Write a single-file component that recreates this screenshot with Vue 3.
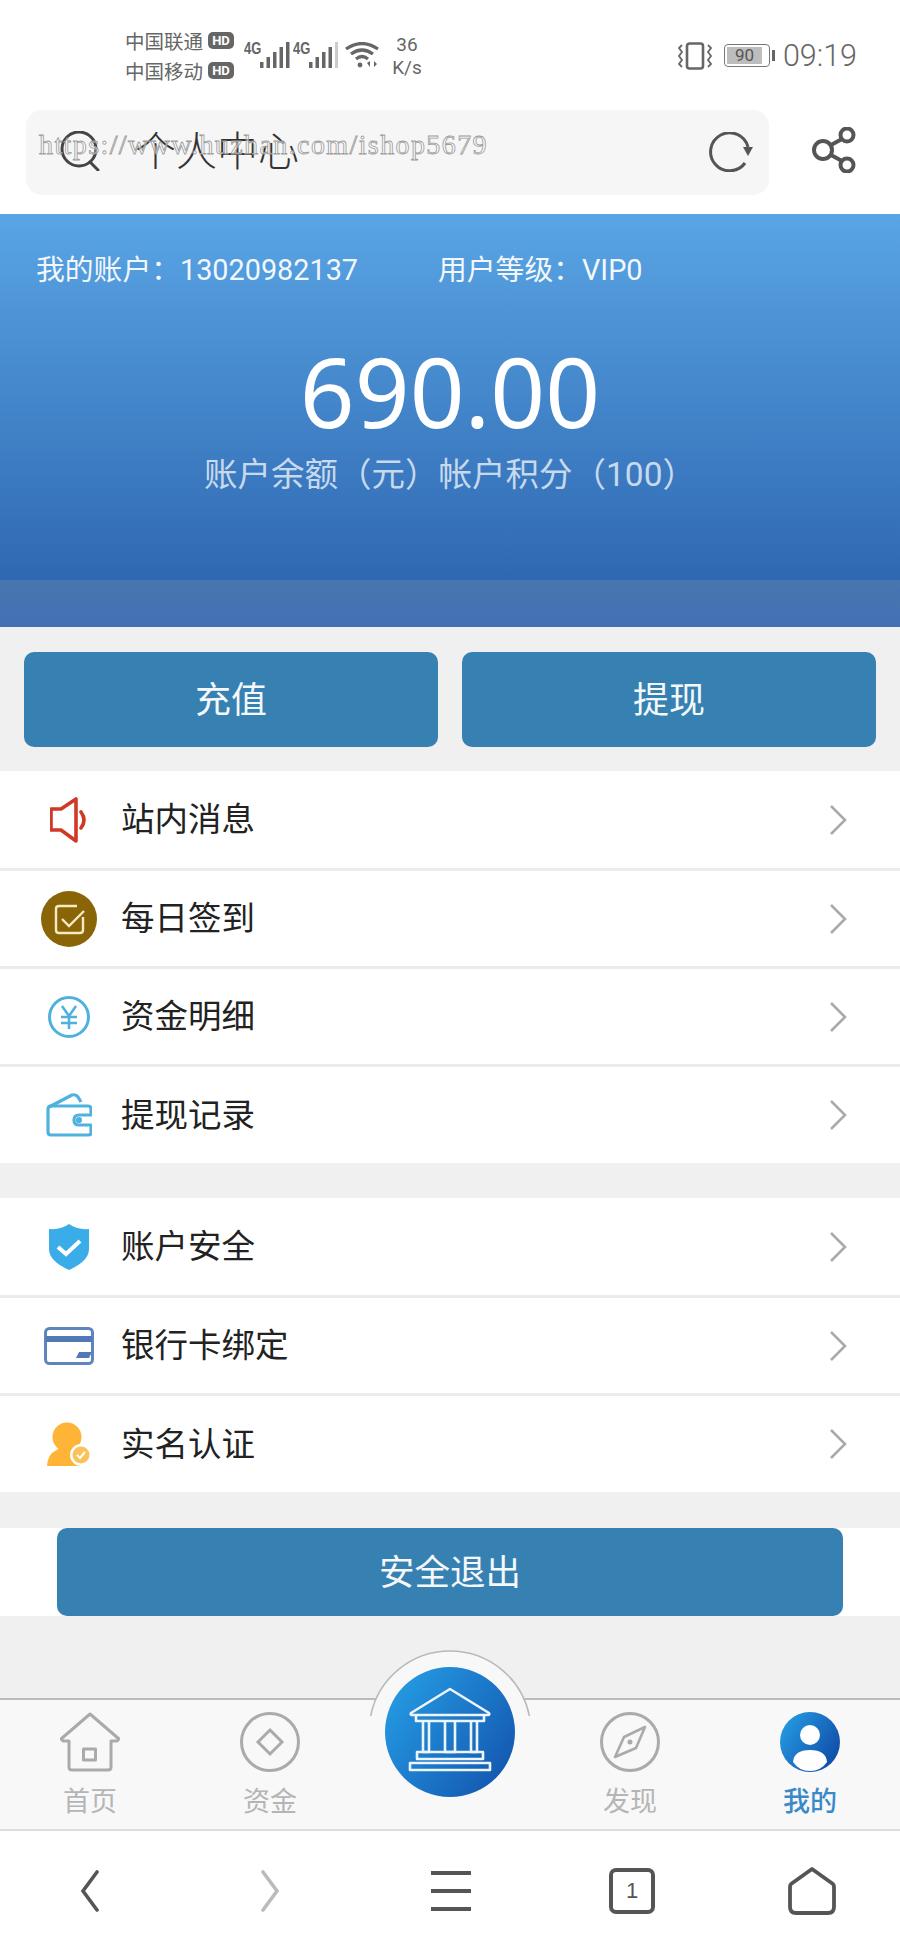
<template>
  <div class="page">
    <header class="head">
      <div class="status">
        <div class="carriers">
          <div class="carrier"><span>中国联通</span><b class="hd">HD</b></div>
          <div class="carrier"><span>中国移动</span><b class="hd">HD</b></div>
        </div>
        <div class="signal">
          <span class="lte">4G</span>
          <svg width="30" height="26" viewBox="0 0 30 26"><g fill="#666"><rect x="0" y="20" width="3.5" height="6" /><rect x="6.5" y="15" width="3.5" height="11" /><rect x="13" y="10" width="3.5" height="16" /><rect x="19.5" y="5" width="3.5" height="21" /><rect x="26" y="0" width="3.5" height="26" /></g></svg>
        </div>
        <div class="signal">
          <span class="lte">4G</span>
          <svg width="30" height="26" viewBox="0 0 30 26"><g fill="#666"><rect x="0" y="20" width="3.5" height="6" /><rect x="6.5" y="15" width="3.5" height="11" /><rect x="13" y="10" width="3.5" height="16" /><rect x="19.5" y="5" width="3.5" height="21" /></g><rect x="26" y="0" width="3" height="26" fill="#ccc" /></svg>
        </div>
        <svg class="wifi" width="34" height="26" viewBox="0 0 34 26" fill="none" stroke="#666" stroke-width="3.2">
          <path d="M1 7Q17 -4 33 7" />
          <path d="M6 12Q17 4 28 12" />
          <path d="M11 17Q17 12 23 17" />
          <circle cx="15" cy="23" r="2.4" fill="#666" stroke="none" />
          <path d="M22 21l3-2v6zM29 19l3 3-3 3z" fill="#666" stroke="none" />
        </svg>
        <div class="speed"><span>36</span><span>K/s</span></div>
        <div class="status-right">
          <svg width="36" height="28" viewBox="0 0 36 28" fill="none" stroke="#666">
            <rect x="10" y="1.5" width="16" height="25" rx="2.5" stroke-width="2.6" />
            <path d="M5 3l-3 3 3 4-3 4 3 4-3 4 3 3M31 3l3 3-3 4 3 4-3 4 3 4-3 3" stroke-width="1.8" />
          </svg>
          <div class="battery"><span class="battery-fill">90</span></div>
          <i class="battery-tip"></i>
          <span class="clock">09:19</span>
        </div>
      </div>
      <div class="toolbar">
        <div class="search">
          <svg class="lens" width="42" height="40" viewBox="0 0 42 40" fill="none" stroke="#444" stroke-width="3">
            <circle cx="19" cy="18" r="17" />
            <path d="M30 31l8 8" stroke-linecap="round" />
          </svg>
          <span class="search-title">个人中心</span>
          <svg class="refresh" width="44" height="40" viewBox="0 0 44 40" fill="none" stroke="#555" stroke-width="3">
            <path d="M36 31A19 19 0 1 1 39 15" />
            <path d="M34 15h10l-5 9z" fill="#555" stroke="none" />
          </svg>
          <span class="watermark">https://www.huzhan.com/ishop5679</span>
        </div>
        <svg class="share" width="44" height="46" viewBox="0 0 44 46" fill="none" stroke="#555" stroke-width="4">
          <circle cx="11" cy="23" r="9" />
          <circle cx="35" cy="8" r="6.5" />
          <circle cx="35" cy="38" r="6.5" />
          <path d="M19 18l11-6M19 28l11 6" />
        </svg>
      </div>
    </header>

    <section class="hero">
      <div class="hero-main">
        <div class="account">
          <span>我的账户：13020982137</span>
          <span>用户等级：VIP0</span>
        </div>
        <div class="amount">690.00</div>
        <div class="sub">账户余额（元）帐户积分（100）</div>
      </div>
      <div class="band"></div>
    </section>

    <div class="actions">
      <button class="btn">充值</button>
      <button class="btn">提现</button>
    </div>

    <ul class="group">
      <li v-for="item in group1" :key="item.text" class="row">
        <span class="row-icon">
          <svg v-if="item.icon === 'speaker'" width="38" height="46" viewBox="0 0 38 46" fill="none" stroke="#cf3a26" stroke-width="3.6" stroke-linejoin="round">
            <path d="M2 12h10L27 2v42L12 33H2z" transform="translate(-1 0)" />
            <path d="M31 15q6 8 0 16" stroke-linecap="round" />
          </svg>
          <svg v-else-if="item.icon === 'check'" width="56" height="56" viewBox="0 0 56 56" fill="none">
            <circle cx="28" cy="28" r="28" fill="#8a6508" />
            <path d="M36 15H18q-3 0-3 3v21q0 3 3 3h21q3 0 3-3V26" stroke="#f6e9c4" stroke-width="2.4" />
            <path d="M21 28l7 7 15-15" stroke="#f6e9c4" stroke-width="2.4" />
          </svg>
          <svg v-else-if="item.icon === 'yen'" width="42" height="42" viewBox="0 0 42 42" fill="none" stroke="#4fb1de" stroke-width="3">
            <circle cx="21" cy="21" r="19.5" />
            <path d="M14 10l7 10 7-10M13 21h16M13 27h16M21 20v13" stroke-width="2.6" />
          </svg>
          <svg v-else width="46" height="44" viewBox="0 0 46 44" fill="none" stroke="#4fb1de" stroke-width="3.2" stroke-linejoin="round">
            <path d="M5 13h37q3 0 3 3v6H33q-5 0-5 5t5 5h12v8q0 2-3 2H5q-3 0-3-3V16q0-3 3-3z" />
            <path d="M3 14L26 2q4-1 6 2l3 5" />
            <circle cx="33" cy="27" r="1.5" />
          </svg>
        </span>
        <span class="row-text">{{ item.text }}</span>
        <svg class="chevron" width="20" height="32" viewBox="0 0 20 32" fill="none" stroke="#aaa" stroke-width="2.6"><path d="M3 2l14 14L3 30" /></svg>
      </li>
    </ul>

    <ul class="group second">
      <li v-for="item in group2" :key="item.text" class="row">
        <span class="row-icon">
          <svg v-if="item.icon === 'shield'" width="40" height="46" viewBox="0 0 40 46">
            <path d="M20 0q8 6 20 5v20q0 12-20 21Q0 37 0 25V5q12 1 20-5z" fill="#3aade8" />
            <path d="M9 23l8 7 14-13" fill="none" stroke="#fff" stroke-width="4" />
          </svg>
          <svg v-else-if="item.icon === 'card'" width="50" height="38" viewBox="0 0 50 38" fill="none">
            <rect x="1.5" y="1.5" width="47" height="35" rx="4" stroke="#5f85bd" stroke-width="3" />
            <rect x="2" y="9" width="46" height="6" fill="#5079b6" />
            <path d="M35 25h13l-3 6H32z" fill="#5079b6" />
          </svg>
          <svg v-else width="46" height="44" viewBox="0 0 46 44">
            <circle cx="21" cy="15" r="14.5" fill="#fdb437" />
            <path d="M14 26l16 1q5 1 6 8v9H1q1-12 8-15z" fill="#fdb437" />
            <circle cx="35" cy="33" r="11" fill="#fff" />
            <circle cx="35" cy="33" r="8.5" fill="#fbc25b" />
            <path d="M31 33l3 3 5-6" fill="none" stroke="#fff" stroke-width="2" />
          </svg>
        </span>
        <span class="row-text">{{ item.text }}</span>
        <svg class="chevron" width="20" height="32" viewBox="0 0 20 32" fill="none" stroke="#aaa" stroke-width="2.6"><path d="M3 2l14 14L3 30" /></svg>
      </li>
    </ul>

    <div class="logout-wrap">
      <button class="logout">安全退出</button>
    </div>

    <div class="spacer"></div>

    <nav class="tabbar">
      <div class="tab">
        <svg width="60" height="60" viewBox="0 0 60 60" fill="none" stroke="#aaa" stroke-width="3" stroke-linejoin="round">
          <path d="M30 2L1 27l2 2h6v26q0 3 3 3h36q3 0 3-3V29h6l2-2z" />
          <rect x="23.5" y="37" width="12" height="11" />
        </svg>
        <span>首页</span>
      </div>
      <div class="tab">
        <svg width="60" height="60" viewBox="0 0 60 60" fill="none" stroke="#aaa" stroke-width="3">
          <circle cx="30" cy="30" r="28.5" />
          <path d="M30 18l12 12-12 12-12-12z" />
        </svg>
        <span>资金</span>
      </div>
      <div class="tab-gap"></div>
      <div class="tab">
        <svg width="60" height="60" viewBox="0 0 60 60" fill="none" stroke="#aaa" stroke-width="3">
          <circle cx="30" cy="30" r="28.5" />
          <path d="M45 15L24 25l-9 20 21-9z" stroke-width="2.6" stroke-linejoin="round" />
          <circle cx="30" cy="30" r="2.5" fill="#aaa" stroke="none" />
        </svg>
        <span>发现</span>
      </div>
      <div class="tab active">
        <svg width="60" height="60" viewBox="0 0 60 60">
          <defs>
            <linearGradient id="meFill" x1="0" y1="0" x2="1" y2="0.6">
              <stop offset="0" stop-color="#27a2e8" />
              <stop offset="1" stop-color="#1150aa" />
            </linearGradient>
          </defs>
          <circle cx="30" cy="30" r="30" fill="url(#meFill)" />
          <circle cx="30" cy="23" r="10" fill="#fff" />
          <path d="M13 50q1-12 17-12t17 12q-6 9-17 9t-17-9z" fill="#fff" />
        </svg>
        <span>我的</span>
      </div>
      <div class="center-btn">
        <svg class="center-arc" width="164" height="70" viewBox="0 0 164 70">
          <path d="M2.6 66A81 81 0 0 1 161.4 66" stroke="#b9b9b9" stroke-width="1.5" />
        </svg>
        <div class="center-circle">
          <svg width="130" height="130" viewBox="0 0 130 130" fill="none" stroke="#eef4fb" stroke-width="2.6" stroke-linejoin="round">
            <path d="M65 22L26 46q-1 2 1 2h76q2 0 1-2z" />
            <path d="M31 48v6h68v-6" />
            <path d="M38 54v31h6V54M60 54v31h10V54M86 54v31h6V54" />
            <path d="M32 85h66v7H32z" />
            <path d="M25 96h80v7H25z" />
          </svg>
        </div>
      </div>
    </nav>

    <footer class="browser-nav">
      <svg width="20" height="42" viewBox="0 0 20 42" fill="none" stroke="#555" stroke-width="3.6" stroke-linecap="round"><path d="M17 2L3 21l14 19" /></svg>
      <svg width="20" height="42" viewBox="0 0 20 42" fill="none" stroke="#bbb" stroke-width="3.6" stroke-linecap="round"><path d="M3 2l14 19L3 40" /></svg>
      <svg width="42" height="42" viewBox="0 0 42 42" fill="none" stroke="#555" stroke-width="3.8"><path d="M1 3h40M1 21h40M1 39h40" /></svg>
      <div class="tabs-count">1</div>
      <svg width="48" height="48" viewBox="0 0 48 48" fill="none" stroke="#555" stroke-width="3.8" stroke-linejoin="round"><path d="M24 2L3 17q-1 1-1 3v20q0 6 6 6h32q6 0 6-6V20q0-2-1-3z" /></svg>
    </footer>
  </div>
</template>

<script setup>
const group1 = [
  { icon: 'speaker', text: '站内消息' },
  { icon: 'check', text: '每日签到' },
  { icon: 'yen', text: '资金明细' },
  { icon: 'wallet', text: '提现记录' }
]

const group2 = [
  { icon: 'shield', text: '账户安全' },
  { icon: 'card', text: '银行卡绑定' },
  { icon: 'person', text: '实名认证' }
]
</script>

<style>
html, body { margin: 0; padding: 0; background: #f0f0f0; }
</style>

<style scoped>
.page {
  width: 900px; height: 1950px; display: flex; flex-direction: column;
  background: #f0f0f0; font-family: Roboto, "Noto Sans CJK SC", sans-serif; overflow: hidden;
}
.head { background: #fff; height: 214px; flex: none; }
.status { height: 110px; display: flex; align-items: flex-start; padding-left: 125px; padding-right: 43px; box-sizing: border-box; color: #666; }
.carriers { padding-top: 25px; width: 114px; flex: none; }
.carrier { display: flex; align-items: center; gap: 5px; height: 30px; font-size: 19.5px; }
.hd { background: #666; color: #fff; font-size: 13px; width: 26px; height: 17px; line-height: 17px; text-align: center; border-radius: 5px; font-weight: 700; }
.signal { display: flex; align-items: flex-end; margin-top: 42px; margin-left: 5px; width: 46px; height: 26px; flex: none; margin-right: -2px; }
.lte { font-size: 13px; font-weight: 700; line-height: 14px; align-self: flex-start; width: 16px; flex: none; font-family: "Liberation Sans", sans-serif; transform: scaleY(1.2); }
.wifi { margin-top: 42px; margin-left: 8px; flex: none; }
.speed { display: flex; flex-direction: column; align-items: center; margin-left: 11px; margin-top: 33px; font-size: 19px; line-height: 23px; width: 34px; flex: none; }
.status-right { margin-left: auto; display: flex; align-items: center; margin-top: 41px; height: 29px; }
.battery { width: 46px; height: 23px; border: 1.5px solid #777; border-radius: 4px; box-sizing: border-box; padding: 2px; margin-left: 11px; }
.battery-fill { display: block; height: 100%; width: 88%; background: #bdbdbd; font-size: 17px; line-height: 16px; text-align: center; color: #555; }
.battery-tip { width: 3px; height: 11px; background: #666; margin-left: 2px; margin-right: 8px; }
.clock { font-weight: 300; font-size: 30.5px; color: #666; line-height: 29px; }

.toolbar { display: flex; align-items: flex-start; padding-left: 26px; }
.search {
  width: 743px; height: 85px; background: #f6f6f6; border-radius: 16px;
  display: flex; align-items: center; padding: 0 16px 0 34px; box-sizing: border-box; position: relative;
}
.lens { margin-top: -4px; }
.search-title { font-size: 41px; color: #333; margin-left: 33px; line-height: 85px; font-weight: 300; }
.refresh { margin-left: auto; margin-top: -2px; }
.watermark {
  position: absolute; left: 13px; top: 18px; font-family: "Liberation Serif", serif; font-size: 28px; line-height: 34px;
  letter-spacing: 1.4px; color: rgba(255, 255, 255, 0.55); -webkit-text-stroke: 0.8px #9a9a9a; white-space: nowrap;
}
.share { margin-left: 43px; margin-top: 17px; }

.hero { flex: none; color: #fff; height: 413px; display: flex; flex-direction: column; }
.hero-main { height: 366px; background: linear-gradient(#59a5e5, #2f68b1); box-sizing: border-box; padding-top: 38px; }
.account { display: flex; gap: 80px; padding-left: 36px; font-size: 28.8px; line-height: 36px; color: #f2f7fc; }
.amount { text-align: center; font-family: "Noto Sans", sans-serif; font-size: 96px; line-height: 110px; margin-top: 48px; }
.sub { text-align: center; font-size: 33.5px; line-height: 40px; margin-top: 9px; color: rgba(255, 255, 255, 0.72); }
.band { height: 47px; background: linear-gradient(#4876ae, #4370b4); }

.actions { flex: none; display: flex; gap: 24px; padding: 25px 24px 24px; }
.btn {
  flex: 1; height: 95px; border: none; border-radius: 10px; background: #3681b1; color: #f4f8fb;
  font-family: inherit; font-size: 36px; padding: 0 0 6px;
}

.group { list-style: none; margin: 0; padding: 0; background: #fff; flex: none; }
.second { margin-top: 35px; }
.row { height: 98px; display: flex; align-items: center; box-sizing: border-box; }
.row + .row { border-top: 3px solid #ebebeb; }
.row:first-child { height: 97px; }
.row:last-child { height: 99px; }
.row-icon { width: 100px; margin-left: 19px; margin-right: 2px; flex: none; display: flex; justify-content: center; }
.row-text { font-size: 33.5px; color: #222; flex: 1; padding-bottom: 6px; }
.chevron { margin-right: 52px; }

.logout-wrap { flex: none; margin-top: 36px; background: #fff; padding: 0 57px; }
.logout {
  display: block; width: 100%; height: 88px; border: none; border-radius: 10px; background: #3681b1; color: #f4f8fb;
  font-family: inherit; font-size: 35.5px; padding: 0 0 5px;
}
.spacer { flex: 1; }

.tabbar {
  flex: none; height: 133px; box-sizing: border-box; background: #f8f8f8; border-top: 2px solid #bcbcbc; border-bottom: 2px solid #dedede;
  display: flex; padding-top: 12px; position: relative;
}
.tab { width: 180px; display: flex; flex-direction: column; align-items: center; color: #b5b5b5; font-size: 27px; line-height: 30px; gap: 15px; }
.tab.active { color: #3a8aca; font-weight: 500; }
.tab-gap { flex: 1; }
.center-btn { position: absolute; left: 368px; top: -50px; width: 164px; height: 150px; }
.center-arc { position: absolute; left: 0; top: 0; }
.center-arc path { fill: #f8f8f8; }
.center-circle {
  position: absolute; left: 17px; top: 17px; width: 130px; height: 130px; border-radius: 50%;
  background: linear-gradient(125deg, #27a2e8, #1150aa);
}
.browser-nav { flex: none; height: 119px; background: #fff; display: flex; align-items: center; box-sizing: border-box; }
.browser-nav > * { flex: none; }
.browser-nav > :nth-child(1) { margin-left: 80px; }
.browser-nav > :nth-child(2) { margin-left: 160px; }
.browser-nav > :nth-child(3) { margin-left: 150px; }
.browser-nav > :nth-child(4) { margin-left: 137px; }
.browser-nav > :nth-child(5) { margin-left: 133px; }
.tabs-count {
  width: 46px; height: 46px; box-sizing: border-box; border: 4px solid #555; border-radius: 7px; color: #555;
  font-size: 22px; line-height: 37px; text-align: center; font-family: "Liberation Sans", sans-serif;
}
</style>
